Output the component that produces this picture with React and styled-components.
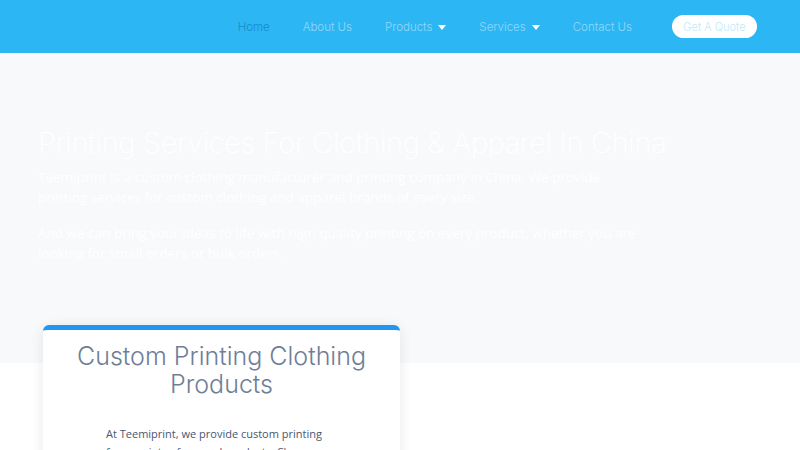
import React from 'react';
import styled, { createGlobalStyle } from 'styled-components';

const GlobalStyle = createGlobalStyle`
  html, body {
    margin: 0;
    padding: 0;
    background: #ffffff;
    overflow: hidden;
  }
  * { box-sizing: border-box; }
`;

const thin = `Inter, 'Open Sans', sans-serif`;

const Page = styled.div`
  width: 800px;
  height: 450px;
  overflow: hidden;
  font-family: 'Open Sans', 'Noto Sans', sans-serif;
`;

const Header = styled.header`
  height: 53px;
  background: #2cb6f4;
  display: flex;
  align-items: center;
  justify-content: flex-end;
  padding-right: 43px;
`;

const Nav = styled.nav`
  display: flex;
  align-items: center;
  gap: 33px;
  margin-right: 40px;
`;

const NavLink = styled.a`
  display: flex;
  align-items: center;
  gap: 6px;
  font-family: ${thin};
  font-weight: 300;
  font-size: 11.5px;
  color: ${(p) => (p.$active ? '#1b8bcb' : '#93d8f8')};
  text-decoration: none;
  white-space: nowrap;
`;

const Caret = styled.span`
  width: 0;
  height: 0;
  border-left: 4px solid transparent;
  border-right: 4px solid transparent;
  border-top: 5px solid #ffffff;
  margin-top: 1px;
`;

const QuoteButton = styled.a`
  display: flex;
  align-items: center;
  justify-content: center;
  width: 85px;
  height: 23px;
  border-radius: 12px;
  background: #ffffff;
  color: #c3e9fb;
  font-family: ${thin};
  font-weight: 300;
  font-size: 11px;
  text-decoration: none;
  white-space: nowrap;
`;

const Hero = styled.section`
  height: 310px;
  background: #f8f9fb;
  padding: 72px 0 0 38px;
`;

const HeroTitle = styled.h1`
  margin: 0;
  font-family: ${thin};
  font-weight: 200;
  font-size: 29px;
  line-height: 36px;
  letter-spacing: -0.35px;
  color: #ffffff;
  white-space: nowrap;
`;

const HeroText = styled.p`
  margin: ${(p) => (p.$first ? '6px' : '16px')} 0 0;
  width: 610px;
  font-family: 'Open Sans', 'Noto Sans', sans-serif;
  font-size: 13.5px;
  line-height: 20px;
  color: #ffffff;
`;

const CardArea = styled.div`
  padding-left: 43px;
  margin-top: -38px;
`;

const Card = styled.article`
  width: 357px;
  height: 200px;
  background: #ffffff;
  border-top: 5px solid #2196f3;
  border-radius: 6px 6px 0 0;
  box-shadow: 0 2px 14px rgba(0, 0, 0, 0.09);
  padding-top: 12px;
`;

const CardTitle = styled.h2`
  margin: 0 auto;
  width: 300px;
  text-align: center;
  font-family: ${thin};
  font-weight: 300;
  font-size: 25px;
  line-height: 28px;
  color: #6e7e98;
`;

const CardText = styled.p`
  margin: 27px 0 0 63px;
  width: 225px;
  font-family: 'Open Sans', 'Noto Sans', sans-serif;
  font-size: 11px;
  line-height: 18px;
  color: #4a5670;
`;

const navItems = [
  { label: 'Home', active: true },
  { label: 'About Us' },
  { label: 'Products', caret: true },
  { label: 'Services', caret: true },
  { label: 'Contact Us' },
];

export default function App() {
  return (
    <Page>
      <GlobalStyle />
      <Header>
        <Nav>
          {navItems.map((item) => (
            <NavLink key={item.label} href="#" $active={item.active}>
              {item.label}
              {item.caret && <Caret />}
            </NavLink>
          ))}
        </Nav>
        <QuoteButton href="#">Get A Quote</QuoteButton>
      </Header>
      <Hero>
        <HeroTitle>Printing Services For Clothing &amp; Apparel In China</HeroTitle>
        <HeroText $first>
          Teemiprint is a custom clothing manufacturer and printing company in China. We
          provide printing services for custom clothing and apparel brands of every size.
        </HeroText>
        <HeroText>
          And we can bring your ideas to life with high quality printing on every product,
          whether you are looking for small orders or bulk orders.
        </HeroText>
      </Hero>
      <CardArea>
        <Card>
          <CardTitle>Custom Printing Clothing Products</CardTitle>
          <CardText>
            At Teemiprint, we provide custom printing for a variety of apparel products. Choose
            the product you need.
          </CardText>
        </Card>
      </CardArea>
    </Page>
  );
}
